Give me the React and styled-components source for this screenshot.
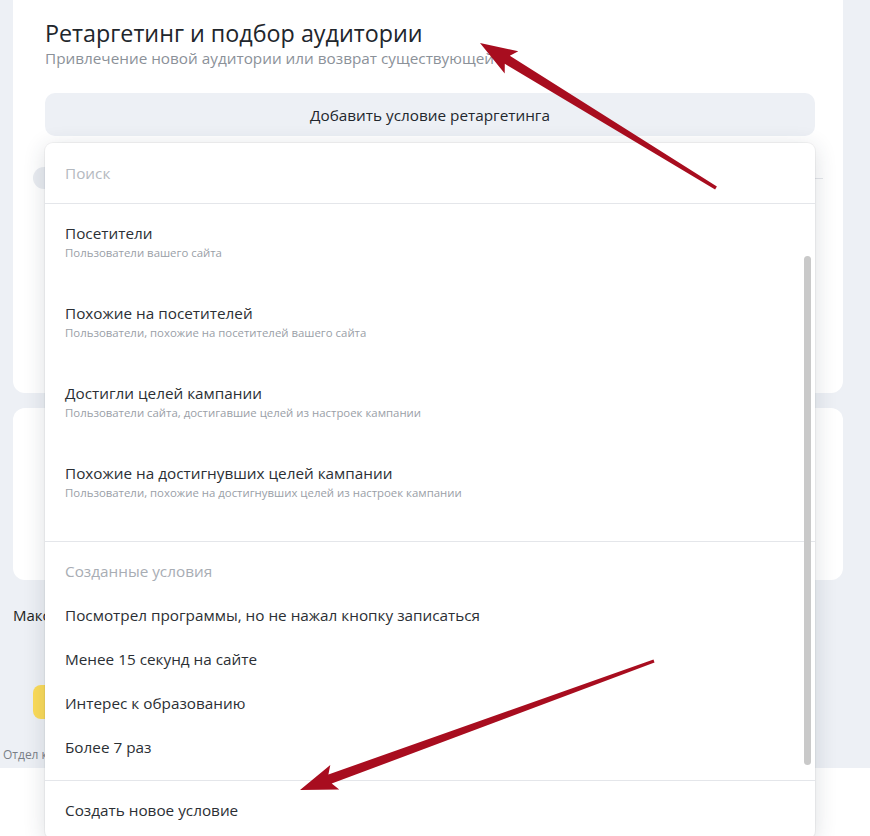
import React from 'react'
import styled, { createGlobalStyle } from 'styled-components';

const GlobalStyle = createGlobalStyle`
  html, body {
    margin: 0;
    padding: 0;
    background: #ffffff;
    font-family: "Open Sans", "Noto Sans", sans-serif;
    overflow: hidden;
  }
  * { box-sizing: border-box; }
`;

const presets = [
  {titulo: 'Посетители', desc: 'Пользователи вашего сайта'},
  {titulo: 'Похожие на посетителей', desc: 'Пользователи, похожие на посетителей вашего сайта'},
  {titulo: 'Достигли целей кампании', desc: 'Пользователи сайта, достигавшие целей из настроек кампании'},
  {titulo: 'Похожие на достигнувших целей кампании', desc: 'Пользователи, похожие на достигнувших целей из настроек кампании'},
];

const creadas = [
  'Посмотрел программы, но не нажал кнопку записаться',
  'Менее 15 секунд на сайте',
  'Интерес к образованию',
  'Более 7 раз',
];

// flecha con el cuerpo que se ensancha hacia la punta
const puntosFlecha = (tail, tip, wTail, wBase, headLen, headW) => {
  const dx = tip[0] - tail[0];
  const dy = tip[1] - tail[1];
  const len = Math.hypot(dx, dy);
  const ux = dx / len, uy = dy / len;
  const nx = -uy, ny = ux;
  const bx = tip[0] - ux * headLen, by = tip[1] - uy * headLen;
  const p = [
    [tail[0] + nx * wTail, tail[1] + ny * wTail],
    [bx + nx * wBase, by + ny * wBase],
    [bx + nx * headW - ux * 5, by + ny * headW - uy * 5],
    tip,
    [bx - nx * headW - ux * 5, by - ny * headW - uy * 5],
    [bx - nx * wBase, by - ny * wBase],
    [tail[0] - nx * wTail, tail[1] - ny * wTail],
  ];
  return p.map(([x, y]) => `${x.toFixed(1)},${y.toFixed(1)}`).join(' ');
};

const App = () => {
  return (
    <>
      <GlobalStyle />
      <Pagina>
        <Fondo>
          <Tarjeta $top>
            <Titulo>Ретаргетинг и подбор аудитории</Titulo>
            <Subtitulo>Привлечение новой аудитории или возврат существующей</Subtitulo>
            <ZonaBoton>
              <BotonAgregar>Добавить условие ретаргетинга</BotonAgregar>
              <Menu>
                <Busqueda>Поиск</Busqueda>
                <Lista>
                  {presets.map((p) => (
                    <Opcion key={p.titulo}>
                      <OpcionTitulo>{p.titulo}</OpcionTitulo>
                      <OpcionDesc>{p.desc}</OpcionDesc>
                    </Opcion>
                  ))}
                </Lista>
                <Seccion>
                  <SeccionTitulo>Созданные условия</SeccionTitulo>
                  {creadas.map((c) => (
                    <Condicion key={c}>{c}</Condicion>
                  ))}
                </Seccion>
                <Pie>Создать новое условие</Pie>
                <Barra />
              </Menu>
            </ZonaBoton>
            <FilaCondicion>
              <Chip />
              <Linea />
            </FilaCondicion>
          </Tarjeta>
          <Tarjeta />
          <Recorte $w="32px">
            <Etiqueta>Максимальная</Etiqueta>
          </Recorte>
          <BotonAmarillo />
          <Recorte $w="42px" $ml="-10px">
            <Nota>Отдел клиентов</Nota>
          </Recorte>
        </Fondo>
        <Flechas width="870" height="836" viewBox="0 0 870 836">
          <polygon points={puntosFlecha([716, 188], [480, 43], 1.8, 4.8, 32, 13)} fill="#a80d1f" />
          <polygon points={puntosFlecha([654, 661], [300, 790], 1.6, 4.8, 32, 13)} fill="#a80d1f" />
        </Flechas>
      </Pagina>
    </>
  );
}

const Pagina = styled.div`
  position: relative;
  width: 870px;
  height: 836px;
  overflow: hidden;
`;

const Fondo = styled.div`
  background: #edf0f5;
  height: 768px;
  padding: 0 27px 0 13px;
  display: flex;
  flex-direction: column;
  align-items: stretch;
`;

const Tarjeta = styled.div`
  background: #ffffff;
  border-radius: ${({$top}) => $top ? '0 0 12px 12px' : '12px'};
  height: ${({$top}) => $top ? '393px' : '172px'};
  margin-top: ${({$top}) => $top ? '0' : '15px'};
  padding: ${({$top}) => $top ? '18px 28px 0 32px' : '0 32px'};
  position: relative;
`;

const Titulo = styled.h2`
  margin: 0;
  font-size: 23.3px;
  line-height: 30px;
  font-weight: 500;
  color: #21262c;
`;

const Subtitulo = styled.p`
  margin: 0;
  font-size: 15.3px;
  line-height: 20px;
  color: #8b9199;
`;

const ZonaBoton = styled.div`
  position: relative;
  margin-top: 25px;
  z-index: 2;
`;

const BotonAgregar = styled.div`
  height: 43px;
  border-radius: 10px;
  background: #edf0f5;
  color: #22272d;
  font-size: 15.3px;
  display: flex;
  align-items: center;
  justify-content: center;
`;

const Menu = styled.div`
  position: absolute;
  top: 50px;
  left: 0;
  right: 0;
  background: #ffffff;
  border-radius: 8px;
  box-shadow: 0 0 0 1px rgba(0,0,0,.04), 0 4px 22px rgba(40,50,70,.16);
`;

const Busqueda = styled.div`
  height: 61px;
  padding: 0 20px;
  display: flex;
  align-items: center;
  font-size: 15.3px;
  color: #b4b9c0;
  border-bottom: 1px solid #e4e6ea;
`;

const Lista = styled.div`
  padding-bottom: 17px;
  border-bottom: 1px solid #e4e6ea;
`;

const Opcion = styled.div`
  height: 80px;
  padding: 19px 20px 0;
`;

const OpcionTitulo = styled.div`
  font-size: 15.3px;
  line-height: 20px;
  color: #2b2f34;
`;

const OpcionDesc = styled.div`
  margin-top: 2px;
  font-size: 11.4px;
  line-height: 16px;
  color: #9aa0a7;
`;

const Seccion = styled.div`
  padding: 7px 0 11px;
  border-bottom: 1px solid #e4e6ea;
`;

const SeccionTitulo = styled.div`
  height: 44px;
  padding: 0 20px;
  display: flex;
  align-items: center;
  font-size: 15.3px;
  color: #a8adb4;
`;

const Condicion = styled(SeccionTitulo)`
  color: #2b2f34;
`;

const Pie = styled(Condicion)`
  height: 58px;
`;

const Barra = styled.div`
  position: absolute;
  top: 113px;
  right: 4px;
  width: 7px;
  height: 509px;
  border-radius: 4px;
  background: #c9c9c9;
`;

const FilaCondicion = styled.div`
  margin-top: 31px;
  margin-left: -12px;
  display: flex;
  align-items: center;
  gap: 8px;
`;

const Chip = styled.div`
  width: 40px;
  height: 22px;
  border-radius: 11px;
  background: #e9ecf1;
`;

const Linea = styled.div`
  flex: 1;
  height: 1px;
  background: #e4e6ea;
  margin-right: -8px;
`;

const Recorte = styled.div`
  width: ${({$w}) => $w};
  margin-left: ${({$ml}) => $ml || '0'};
  overflow: hidden;
  white-space: nowrap;
`;

const Etiqueta = styled.div`
  margin-top: 25px;
  font-size: 15px;
  line-height: 20px;
  color: #1d1f22;
`;

const BotonAmarillo = styled.div`
  margin: 60px 0 0 20px;
  width: 140px;
  height: 34px;
  border-radius: 8px;
  background: #fcdc5a;
`;

const Nota = styled.div`
  margin-top: 28px;
  font-size: 12px;
  line-height: 16px;
  color: #7a7f86;
`;

const Flechas = styled.svg`
  position: absolute;
  top: 0;
  left: 0;
  pointer-events: none;
  z-index: 5;
`;

export default App;
